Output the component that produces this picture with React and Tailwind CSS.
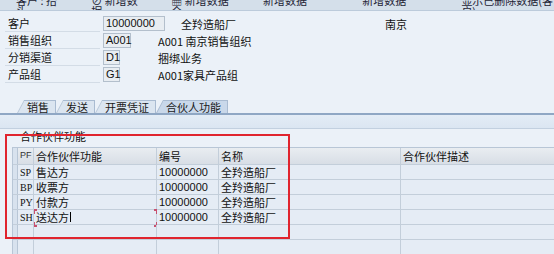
const cjk = { fontFamily: '"Noto Sans CJK SC", "Liberation Sans", sans-serif' };
const serif = { fontFamily: '"Liberation Serif", "Noto Sans CJK SC", serif' };

const formRows = [
  { label: '客户', value: '10000000', w: 'w-[62px]', text: '全羚造船厂', wide: true },
  { label: '销售组织', value: 'A001', w: 'w-[28px]', text: 'A001 南京销售组织' },
  { label: '分销渠道', value: 'D1', w: 'w-[17px]', text: '捆绑业务' },
  { label: '产品组', value: 'G1', w: 'w-[17px]', text: 'A001家具产品组' },
];

const partners = [
  { pf: 'SP', fn: '售达方', no: '10000000', name: '全羚造船厂' },
  { pf: 'BP', fn: '收票方', no: '10000000', name: '全羚造船厂' },
  { pf: 'PY', fn: '付款方', no: '10000000', name: '全羚造船厂' },
  { pf: 'SH', fn: '送达方', no: '10000000', name: '全羚造船厂', focus: true },
];

function Tab({ label, active }) {
  const bg = active ? 'bg-[#c9d8ea]' : 'bg-[#dbe5f0]';
  return (
    <div className="flex items-end">
      <div
        className={`h-[13px] w-[7px] ${active ? 'bg-[#a9bbd1]' : 'bg-[#b9c8d9]'}`}
        style={{ clipPath: 'polygon(100% 0, 100% 100%, 0 100%)' }}
      >
        <div
          className={`ml-[1px] h-[13px] w-[7px] ${bg}`}
          style={{ clipPath: 'polygon(100% 0, 100% 100%, 0 100%)' }}
        />
      </div>
      <div
        className={`flex h-[13px] items-center border-t border-r border-[#a9bbd1] pr-[6px] pl-[3px] text-[11px] leading-none text-[#1a1a1a] ${bg}`}
        style={cjk}
      >
        {label}
      </div>
    </div>
  );
}

function Cell({ className = '', children, style }) {
  return (
    <div className={`flex items-center border-r border-[#c3ceda] px-[2px] ${className}`} style={style}>
      {children}
    </div>
  );
}

function Row({ r, header }) {
  const base = header
    ? 'h-[17px] bg-gradient-to-b from-[#e9edf1] to-[#d8dee6] text-[11px]'
    : 'h-[15px] bg-[#e5ecf5] text-[11px]';
  return (
    <div className={`flex border-b border-[#c3ceda] ${base}`}>
      <div className="w-[5px] border-r border-[#b8c6d6] bg-[#d8e2ee]" />
      <Cell className="w-[16px] text-[10px]" style={header ? { fontFamily: '"Liberation Sans", sans-serif' } : serif}>
        {header ? <span className="text-[9px] text-[#333]">PF</span> : r?.pf}
      </Cell>
      <Cell className="relative w-[123px]" style={cjk}>
        {header ? '合作伙伴功能' : r?.fn}
        {r?.focus && (
          <>
            <span className="ml-px inline-block h-[10px] w-px bg-black" />
            <span className="absolute top-[-1px] left-0 h-[5px] w-[3px] border-t-2 border-l border-[#c8506e]" />
            <span className="absolute bottom-[-3px] left-0 h-[5px] w-[3px] border-b-2 border-l border-[#c8506e]" />
            <span className="absolute top-[-1px] right-[-1px] h-[5px] w-[3px] border-t-2 border-r border-[#c8506e]" />
            <span className="absolute right-[-1px] bottom-[-3px] h-[5px] w-[3px] border-r border-b-2 border-[#c8506e]" />
          </>
        )}
      </Cell>
      <Cell className="w-[62px]" style={header ? cjk : { fontFamily: '"Liberation Sans", sans-serif' }}>
        {header ? '编号' : r?.no}
      </Cell>
      <Cell className="w-[182px]" style={cjk}>
        {header ? '名称' : r?.name}
      </Cell>
      <div className="flex flex-1 items-center px-[2px]" style={cjk}>
        {header ? '合作伙伴描述' : ''}
      </div>
    </div>
  );
}

export default function App() {
  return (
    <div className="relative h-[254px] w-[554px] overflow-hidden bg-[#ebf1f8] text-[#111]" style={cjk}>
      {/* toolbar, cut off at the top of the shot */}
      <div className="h-[11px] overflow-hidden border-b border-[#bccbdb] bg-[#d4dfea]">
        <div className="mt-[-5px] flex h-[11px] gap-[30px] pl-[16px] text-[11px] leading-[11px] text-[#223]">
          <span>客户 : 抬头</span>
          <span>⊘ 新增数据</span>
          <span>▦ 新增数据 全</span>
          <span>新增数据 ···</span>
          <span>新增数据 ···</span>
          <span>显示已删除数据(客户)</span>
        </div>
      </div>

      {/* header fields */}
      <div className="flex flex-col pt-[4px] pl-[5px]">
        {formRows.map((f) => (
          <div key={f.label} className="flex h-[17px] items-center">
            <div className="flex h-[16px] w-[95px] items-center border-b border-[#d3dce6] pl-[3px] text-[11px] leading-[14px]">
              {f.label}
            </div>
            <div className={`ml-[3px] ${f.wide ? '' : 'w-[55px]'}`}>
              <div
                className={`flex h-[15px] ${f.w} items-center border border-[#b3bfcc] bg-[#e8edf2] px-[2px] text-[11px] leading-[13px]`}
                style={{ fontFamily: '"Liberation Sans", sans-serif' }}
              >
                {f.value}
              </div>
            </div>
            <div className={`text-[11px] leading-[14px] ${f.wide ? 'ml-[16px]' : ''}`}>{f.text}</div>
            {f.wide && <div className="ml-[149px] text-[11px] leading-[14px]">南京</div>}
          </div>
        ))}
      </div>

      {/* tabs */}
      <div className="mt-[17px] flex pl-[17px]">
        <Tab label="销售" />
        <Tab label="发送" />
        <Tab label="开票凭证" />
        <Tab label="合伙人功能" active />
      </div>
      <div className="h-[2px] bg-[#8fa7c4]" />
      <div className="h-[14px] border-b border-[#c2d0e0] bg-gradient-to-b from-[#e3ecf6] to-[#dbe6f2]" />

      {/* partner group */}
      <div className="pl-[20px] text-[11px] leading-[14px]">合作伙伴功能</div>
      <div className="mt-[4px] ml-[12px] border-t border-l border-[#b8c6d6]">
        <Row header />
        {partners.map((p) => (
          <Row key={p.pf} r={p} />
        ))}
        <Row />
        <Row />
      </div>

      {/* red annotation */}
      <div className="pointer-events-none absolute top-[134px] left-[5px] h-[105px] w-[285px] border-2 border-[#e0242e]" />
    </div>
  );
}
